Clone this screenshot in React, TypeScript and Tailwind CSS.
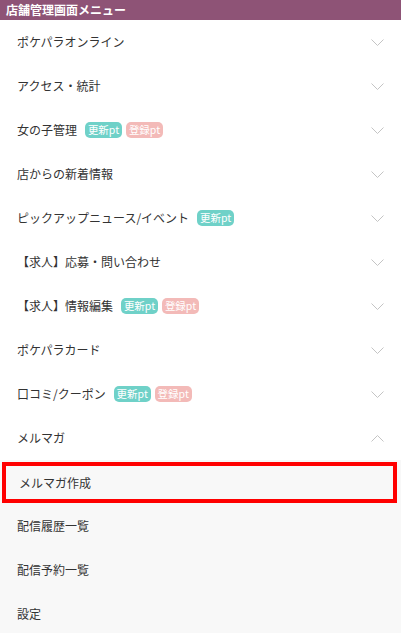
import { ReactNode } from "react"

type Item = {
  label: string
  badges?: ("update" | "register")[]
  open?: boolean
}

const items: Item[] = [
  { label: "ポケパラオンライン" },
  { label: "アクセス・統計" },
  { label: "女の子管理", badges: ["update", "register"] },
  { label: "店からの新着情報" },
  { label: "ピックアップニュース/イベント", badges: ["update"] },
  { label: "【求人】応募・問い合わせ" },
  { label: "【求人】情報編集", badges: ["update", "register"] },
  { label: "ポケパラカード" },
  { label: "口コミ/クーポン", badges: ["update", "register"] },
  { label: "メルマガ", open: true },
]

const subItems = ["メルマガ作成", "配信履歴一覧", "配信予約一覧", "設定"]

function Chevron({ up }: { up?: boolean }) {
  return (
    <svg width="13" height="7" viewBox="0 0 13 7" className="shrink-0">
      <path
        d={up ? "M0.5 6.5 L6.5 0.5 L12.5 6.5" : "M0.5 0.5 L6.5 6.5 L12.5 0.5"}
        fill="none"
        stroke="#c4c4c4"
        strokeWidth="1"
      />
    </svg>
  )
}

function Badge({ kind }: { kind: "update" | "register" }) {
  return (
    <span
      className={`inline-flex h-[16px] w-[37px] items-center justify-center rounded-[5px] text-[10.5px] leading-none text-white ${
        kind === "update" ? "bg-[#6fd1c8]" : "bg-[#f3bab8]"
      }`}
    >
      {kind === "update" ? "更新pt" : "登録pt"}
    </span>
  )
}

function Row({ children, right }: { children: ReactNode; right?: ReactNode }) {
  return (
    <div className="flex h-[44px] items-center justify-between pl-[17px] pr-[17px]">
      <div className="flex items-center gap-[4px]">{children}</div>
      {right}
    </div>
  )
}

export default function App() {
  return (
    <div
      className="h-[633px] w-[401px] overflow-hidden bg-white text-[12px] text-[#333333]"
      style={{ fontFamily: '"Noto Sans CJK JP", "Noto Sans", sans-serif' }}
    >
      <div className="flex h-[20px] items-center bg-[#8e5376] pl-[6px] text-[12px] font-bold leading-none text-white">
        店舗管理画面メニュー
      </div>

      {items.map((item) => (
        <Row key={item.label} right={<Chevron up={item.open} />}>
          <span className="mr-[4px]">{item.label}</span>
          {item.badges?.map((b) => <Badge key={b} kind={b} />)}
        </Row>
      ))}

      <div className="bg-[#f8f8f8]">
        {subItems.map((label, i) =>
          i === 0 ? (
            <div key={label} className="h-[44px] pb-[1px] pl-[2px] pr-[4px] pt-[2px]">
              <div className="flex h-[41px] items-center border-[4px] border-[#ff0000] pl-[13px]">
                {label}
              </div>
            </div>
          ) : (
            <Row key={label}>
              <span>{label}</span>
            </Row>
          )
        )}
      </div>
    </div>
  )
}
